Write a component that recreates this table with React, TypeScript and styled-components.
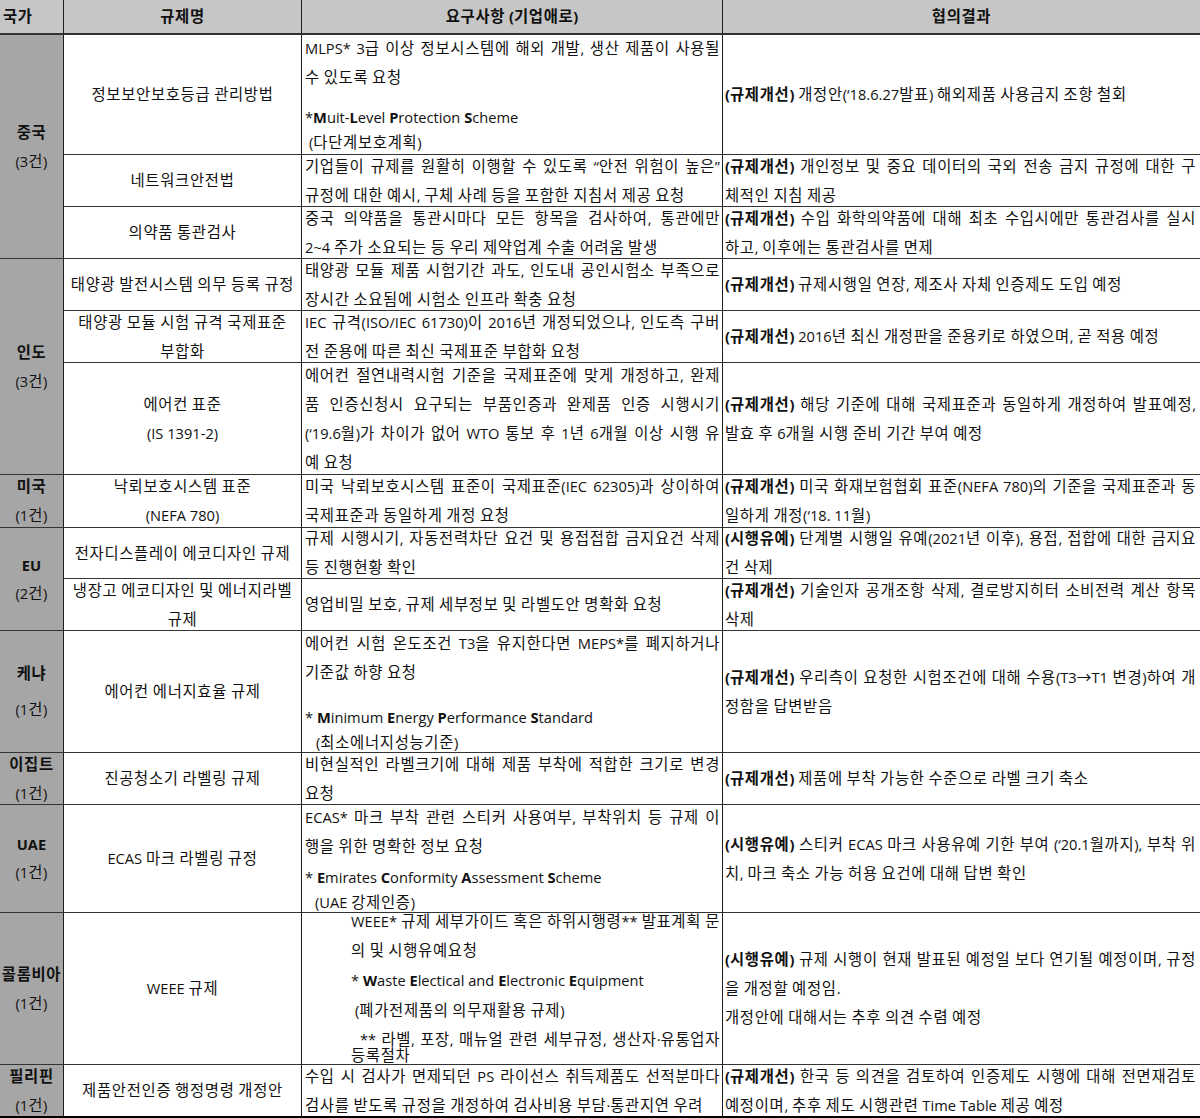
import React from 'react'
import styled, { createGlobalStyle, css } from 'styled-components'

const GlobalStyle = createGlobalStyle`
  body {
    margin: 0;
    background: #fff;
    color: #111;
    font-family: "Open Sans", "Noto Sans CJK KR", sans-serif;
    font-size: 14.67px;
  }
`

const Grid = styled.div<{ $rows: string }>`
  display: grid;
  grid-template-columns: 64px 238px 421px 477px;
  grid-template-rows: ${p => p.$rows};
  width: 1200px;
  border-bottom: 2px solid #000;
  overflow: hidden;
`

const cellBase = css<{ $last?: boolean; $end?: boolean }>`
  box-sizing: border-box;
  display: flex;
  flex-direction: column;
  justify-content: center;
  min-width: 0;
  border-right: ${p => (p.$end ? 'none' : '1px solid #1e1e1e')};
  border-bottom: ${p => (p.$last ? 'none' : '1px solid #333')};
`

const HeadCell = styled.div<{ $align?: string; $end?: boolean }>`
  ${cellBase};
  background: #c6c6c6;
  border-bottom: 2px solid #333;
  font-weight: 700;
  text-align: ${p => p.$align ?? 'center'};
  padding: 0 3px;
  line-height: 29px;
`

const CountryCell = styled.div<{ $span: number; $last?: boolean; $gap?: number }>`
  ${cellBase};
  grid-row: span ${p => p.$span};
  background: #a6a6a6;
  align-items: center;
  gap: ${p => p.$gap ?? 0}px;
  line-height: 28px;
`

const CountryName = styled.span`
  font-weight: 700;
  white-space: nowrap;
`

const CountryCount = styled.span`
  white-space: nowrap;
`

const NameCell = styled.div<{ $last?: boolean }>`
  ${cellBase};
  text-align: center;
  padding: 0 2px;
`

const TextCell = styled.div<{ $last?: boolean; $end?: boolean; $indent?: number; $right?: number }>`
  ${cellBase};
  text-align: left;
  padding: 0 ${p => p.$right ?? 2}px 0 ${p => p.$indent ?? 3}px;
`

const Line = styled.span<{ $fill?: boolean; $lh?: number; $mt?: number; $indent?: number }>`
  display: block;
  line-height: ${p => p.$lh ?? 29}px;
  margin-top: ${p => p.$mt ?? 0}px;
  padding-left: ${p => p.$indent ?? 0}px;
  white-space: nowrap;
  ${p =>
    p.$fill &&
    css`
      text-align: justify;
      text-align-last: justify;
    `}
`

// hangul runs: the reference face sets them a little wider than Noto
const Hangul = styled.span`
  font-size: 15.4px;
  letter-spacing: 0.7px;
`

const B = styled.b`
  font-weight: 700;
`

type Seg = string | { b: string }

type LineData = {
  t: Seg[]
  fill?: boolean
  lh?: number
  mt?: number
  indent?: number
}

type Row = {
  h: number
  country?: { name: string; count: string; span: number; gap?: number }
  name: string[]
  req: LineData[]
  reqIndent?: number
  res: LineData[]
}

type Opts = Omit<LineData, 't'>

const toSegs = (t: string | Seg[]): Seg[] => (typeof t === 'string' ? [t] : t)
const L = (t: string | Seg[], o: Opts = {}): LineData => ({ t: toSegs(t), ...o })
const F = (t: string | Seg[], o: Opts = {}): LineData => ({ t: toSegs(t), fill: true, ...o })

// "(규제개선) ..." style result line
const tag = (label: string, text: string): Seg[] => [{ b: `(${label})` }, ` ${text}`]

// bold every capital that opens a word: *Muit-Level Protection Scheme
const acro = (s: string): Seg[] =>
  s.split(/(?<![A-Za-z])([A-Z])/).map((part, i) => (i % 2 === 1 ? { b: part } : part))

function Text({ s }: { s: string }) {
  const parts = s.split(/([\u1100-\u11ff\u3130-\u318f\uac00-\ud7af]+)/)
  return (
    <>
      {parts.map((p, i) => (i % 2 === 1 ? <Hangul key={i}>{p}</Hangul> : p))}
    </>
  )
}

const rows: Row[] = [
  {
    h: 120,
    country: { name: '중국', count: '(3건)', span: 3 },
    name: ['정보보안보호등급 관리방법'],
    req: [
      F('MLPS* 3급 이상 정보시스템에 해외 개발, 생산 제품이 사용될'),
      L('수 있도록 요청'),
      L(acro('*Muit-Level Protection Scheme'), { lh: 25, mt: 13 }),
      L('(다단계보호계획)', { lh: 25, indent: 4 }),
    ],
    res: [L(tag('규제개선', '개정안(‘18.6.27발표) 해외제품 사용금지 조항 철회'))],
  },
  {
    h: 52,
    name: ['네트워크안전법'],
    req: [
      F('기업들이 규제를 원활히 이행할 수 있도록 “안전 위험이 높은”'),
      L('규정에 대한 예시, 구체 사례 등을 포함한 지침서 제공 요청'),
    ],
    res: [
      F(tag('규제개선', '개인정보 및 중요 데이터의 국외 전송 금지 규정에 대한 구')),
      L('체적인 지침 제공'),
    ],
  },
  {
    h: 52,
    name: ['의약품 통관검사'],
    req: [
      F('중국 의약품을 통관시마다 모든 항목을 검사하여, 통관에만'),
      L('2~4 주가 소요되는 등 우리 제약업계 수출 어려움 발생'),
    ],
    res: [
      F(tag('규제개선', '수입 화학의약품에 대해 최초 수입시에만 통관검사를 실시')),
      L('하고, 이후에는 통관검사를 면제'),
    ],
  },
  {
    h: 52,
    country: { name: '인도', count: '(3건)', span: 3 },
    name: ['태양광 발전시스템 의무 등록 규정'],
    req: [
      F('태양광 모듈 제품 시험기간 과도, 인도내 공인시험소 부족으로'),
      L('장시간 소요됨에 시험소 인프라 확충 요청'),
    ],
    res: [L(tag('규제개선', '규제시행일 연장, 제조사 자체 인증제도 도입 예정'))],
  },
  {
    h: 52,
    name: ['태양광 모듈 시험 규격 국제표준', '부합화'],
    req: [
      F('IEC 규격(ISO/IEC 61730)이 2016년 개정되었으나, 인도측 구버'),
      L('전 준용에 따른 최신 국제표준 부합화 요청'),
    ],
    res: [L(tag('규제개선', '2016년 최신 개정판을 준용키로 하였으며, 곧 적용 예정'))],
  },
  {
    h: 112,
    name: ['에어컨 표준', '(IS 1391-2)'],
    req: [
      F('에어컨 절연내력시험 기준을 국제표준에 맞게 개정하고, 완제'),
      F('품 인증신청시 요구되는 부품인증과 완제품 인증 시행시기'),
      F('(‘19.6월)가 차이가 없어 WTO 통보 후 1년 6개월 이상 시행 유'),
      L('예 요청'),
    ],
    res: [
      F(tag('규제개선', '해당 기준에 대해 국제표준과 동일하게 개정하여 발표예정,')),
      L('발효 후 6개월 시행 준비 기간 부여 예정'),
    ],
  },
  {
    h: 53,
    country: { name: '미국', count: '(1건)', span: 1 },
    name: ['낙뢰보호시스템 표준', '(NEFA 780)'],
    req: [
      F('미국 낙뢰보호시스템 표준이 국제표준(IEC 62305)과 상이하여'),
      L('국제표준과 동일하게 개정 요청'),
    ],
    res: [
      F(tag('규제개선', '미국 화재보험협회 표준(NEFA 780)의 기준을 국제표준과 동')),
      L('일하게 개정(‘18. 11월)'),
    ],
  },
  {
    h: 51,
    country: { name: 'EU', count: '(2건)', span: 2 },
    name: ['전자디스플레이 에코디자인 규제'],
    req: [
      F('규제 시행시기, 자동전력차단 요건 및 용접접합 금지요건 삭제'),
      L('등 진행현황 확인'),
    ],
    res: [
      F(tag('시행유예', '단계별 시행일 유예(2021년 이후), 용접, 접합에 대한 금지요')),
      L('건 삭제'),
    ],
  },
  {
    h: 52,
    name: ['냉장고 에코디자인 및 에너지라벨', '규제'],
    req: [L('영업비밀 보호, 규제 세부정보 및 라벨도안 명확화 요청')],
    res: [
      F(tag('규제개선', '기술인자 공개조항 삭제, 결로방지히터 소비전력 계산 항목')),
      L('삭제'),
    ],
  },
  {
    h: 122,
    country: { name: '케냐', count: '(1건)', span: 1, gap: 7 },
    name: ['에어컨 에너지효율 규제'],
    req: [
      F('에어컨 시험 온도조건 T3을 유지한다면 MEPS*를 폐지하거나'),
      L('기준값 하향 요청'),
      L(acro('* Minimum Energy Performance Standard'), { lh: 25, mt: 18 }),
      L('(최소에너지성능기준)', { lh: 25, indent: 11 }),
    ],
    res: [
      F(tag('규제개선', '우리측이 요청한 시험조건에 대해 수용(T3→T1 변경)하여 개')),
      L('정함을 답변받음'),
    ],
  },
  {
    h: 52,
    country: { name: '이집트', count: '(1건)', span: 1 },
    name: ['진공청소기 라벨링 규제'],
    req: [
      F('비현실적인 라벨크기에 대해 제품 부착에 적합한 크기로 변경'),
      L('요청'),
    ],
    res: [L(tag('규제개선', '제품에 부착 가능한 수준으로 라벨 크기 축소'))],
  },
  {
    h: 108,
    country: { name: 'UAE', count: '(1건)', span: 1 },
    name: ['ECAS 마크 라벨링 규정'],
    req: [
      F('ECAS* 마크 부착 관련 스티커 사용여부, 부착위치 등 규제 이'),
      L('행을 위한 명확한 정보 요청'),
      L(acro('* Emirates Conformity Assessment Scheme'), { lh: 25, mt: 4 }),
      L('(UAE 강제인증)', { lh: 25, indent: 10 }),
    ],
    res: [
      F(tag('시행유예', '스티커 ECAS 마크 사용유예 기한 부여 (‘20.1월까지), 부착 위')),
      L('치, 마크 축소 가능 허용 요건에 대해 답변 확인'),
    ],
  },
  {
    h: 152,
    country: { name: '콜롬비아', count: '(1건)', span: 1 },
    name: ['WEEE 규제'],
    reqIndent: 49,
    req: [
      F('WEEE* 규제 세부가이드 혹은 하위시행령** 발표계획 문'),
      L('의 및 시행유예요청'),
      L(acro('* Waste Electical and Electronic Equipment'), { lh: 30 }),
      L('(폐가전제품의 의무재활용 규제)', { lh: 30, indent: 4 }),
      F('** 라벨, 포장, 매뉴얼 관련 세부규정, 생산자·유통업자', { lh: 26, indent: 9 }),
      L('등록절차', { lh: 28, mt: -12 }),
    ],
    res: [
      F(tag('시행유예', '규제 시행이 현재 발표된 예정일 보다 연기될 예정이며, 규정')),
      L('을 개정할 예정임.'),
      L('개정안에 대해서는 추후 의견 수렴 예정'),
    ],
  },
  {
    h: 51,
    country: { name: '필리핀', count: '(1건)', span: 1 },
    name: ['제품안전인증 행정명령 개정안'],
    req: [
      F('수입 시 검사가 면제되던 PS 라이선스 취득제품도 선적분마다'),
      L('검사를 받도록 규정을 개정하여 검사비용 부담·통관지연 우려'),
    ],
    res: [
      F(tag('규제개선', '한국 등 의견을 검토하여 인증제도 시행에 대해 전면재검토')),
      L('예정이며, 추후 제도 시행관련 Time Table 제공 예정'),
    ],
  },
]

function Lines({ lines }: { lines: LineData[] }) {
  return (
    <>
      {lines.map((l, i) => (
        <Line key={i} $fill={l.fill} $lh={l.lh} $mt={l.mt} $indent={l.indent}>
          {l.t.map((seg, j) =>
            typeof seg === 'string' ? (
              <Text key={j} s={seg} />
            ) : (
              <B key={j}>
                <Text s={seg.b} />
              </B>
            )
          )}
        </Line>
      ))}
    </>
  )
}

const headers = ['국가', '규제명', '요구사항 (기업애로)', '협의결과']

export default function App() {
  const template = ['35px', ...rows.map(r => `${r.h}px`)].join(' ')
  const lastIndex = rows.length - 1

  return (
    <>
      <GlobalStyle />
      <Grid $rows={template}>
        {headers.map((h, i) => (
          <HeadCell key={h} $align={i === 0 ? 'left' : 'center'} $end={i === headers.length - 1}>
            <Line>
              <Text s={h} />
            </Line>
          </HeadCell>
        ))}
        {rows.map((row, i) => {
          const last = i === lastIndex
          return (
            <React.Fragment key={i}>
              {row.country && (
                <CountryCell
                  $span={row.country.span}
                  $gap={row.country.gap}
                  $last={i + row.country.span - 1 === lastIndex}
                >
                  <CountryName>
                    <Text s={row.country.name} />
                  </CountryName>
                  <CountryCount>
                    <Text s={row.country.count} />
                  </CountryCount>
                </CountryCell>
              )}
              <NameCell $last={last}>
                {row.name.map((n, j) => (
                  <Line key={j}>
                    <Text s={n} />
                  </Line>
                ))}
              </NameCell>
              <TextCell $last={last} $indent={row.reqIndent}>
                <Lines lines={row.req} />
              </TextCell>
              <TextCell $last={last} $end $indent={2} $right={4}>
                <Lines lines={row.res} />
              </TextCell>
            </React.Fragment>
          )
        })}
      </Grid>
    </>
  )
}
